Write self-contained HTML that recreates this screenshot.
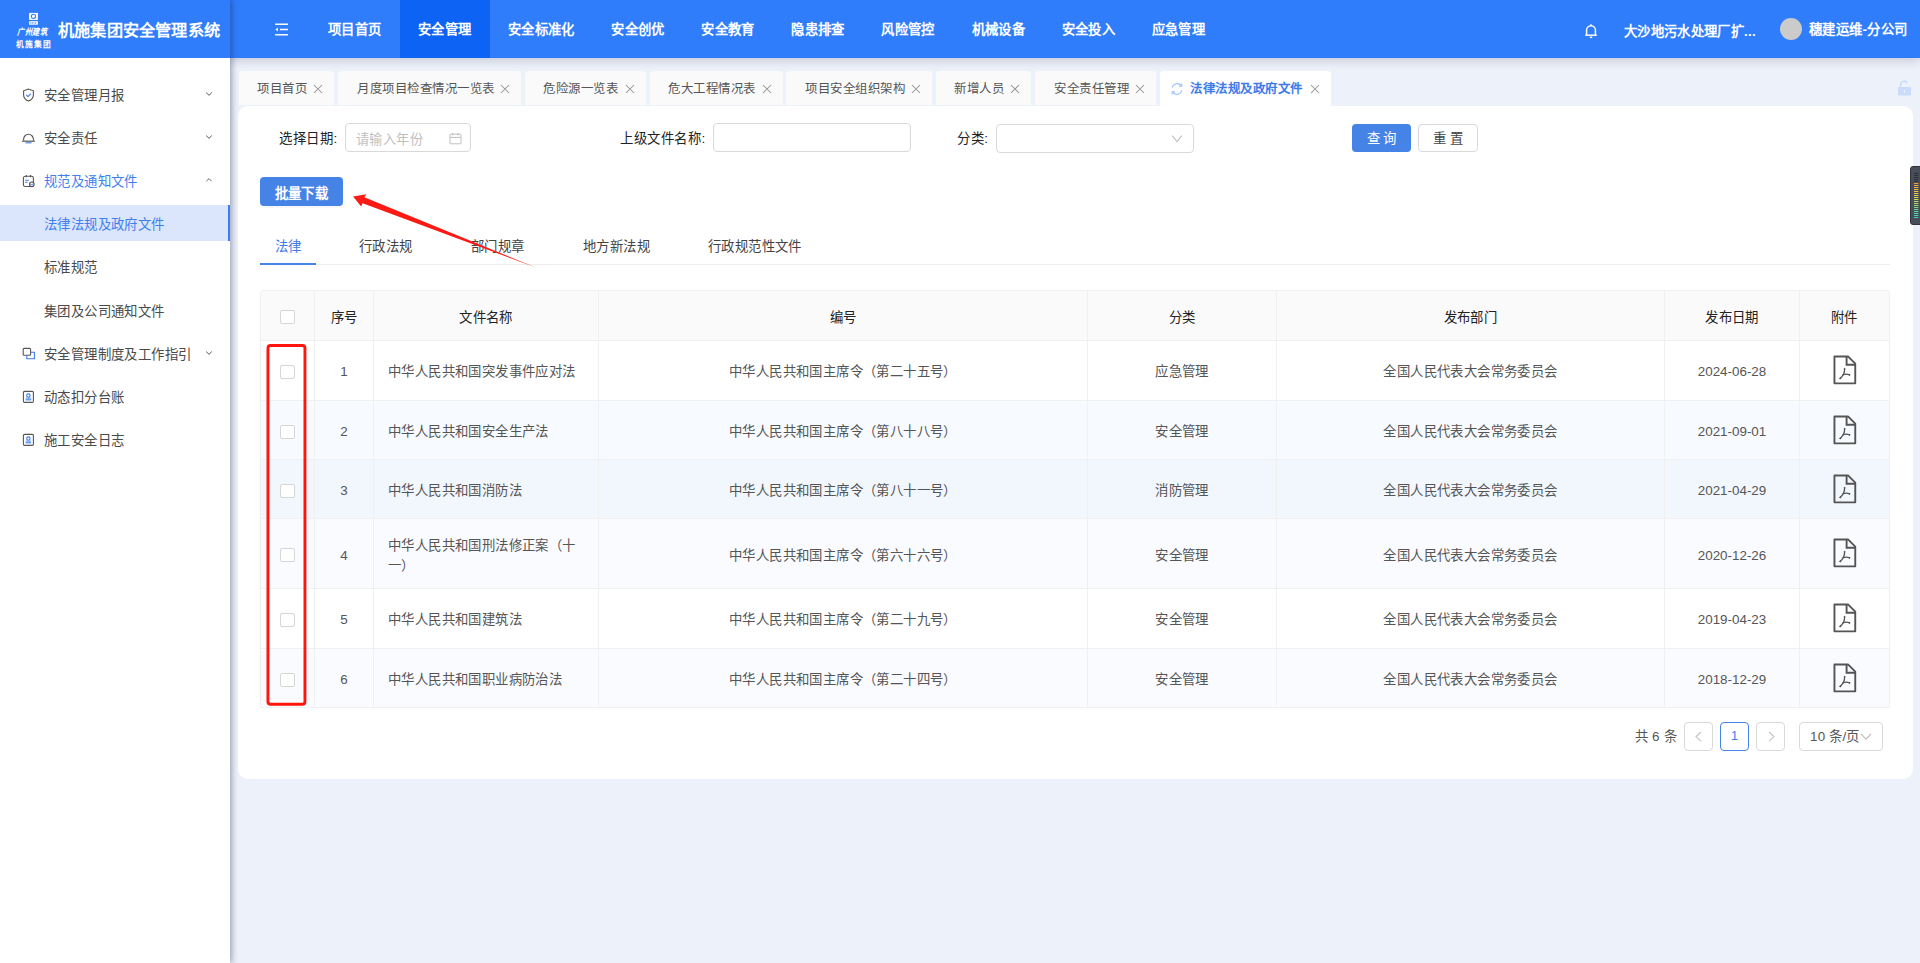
<!DOCTYPE html>
<html lang="zh-CN">
<head>
<meta charset="utf-8">
<title>机施集团安全管理系统</title>
<style>
*{box-sizing:border-box;margin:0;padding:0}
html,body{width:1920px;height:963px;overflow:hidden}
body{font-family:"Liberation Sans",sans-serif;font-size:13.4px;letter-spacing:.4px;color:#333;background:#edf1fa;position:relative}
.abs{position:absolute}
/* header */
#hdr{position:absolute;left:0;top:0;width:1920px;height:58px;background:#307dfc;z-index:5;box-shadow:0 2px 10px rgba(20,30,60,.2)}
#title{position:absolute;left:58px;top:0;height:58px;line-height:61px;font-size:16.2px;letter-spacing:.2px;font-weight:700;color:#fff;white-space:nowrap}
.nav{position:absolute;top:0;height:58px;line-height:59px;color:#fff;font-weight:700;font-size:13.33px;letter-spacing:.33px;text-align:center;white-space:nowrap}
.nav.on{background:#0d63f3}
/* sidebar */
#side{position:absolute;left:0;top:0;width:230px;height:963px;background:#fff;z-index:6;box-shadow:2px 0 6px rgba(10,30,70,.36)}
#side .top{position:absolute;left:0;top:0;width:230px;height:58px;background:#307dfc}
.mi{position:absolute;left:0;width:230px;height:36px;line-height:38px;font-size:13.4px;letter-spacing:.4px;color:#4a4a4a;white-space:nowrap}
.mi span{position:absolute;left:44px;top:0}
.mi.sel{background:#dbe6fd;color:#3f7ff0;border-right:2px solid #3c7df0;line-height:40px}
.mi.act{color:#3f7ff0}
/* page tabs */
.pt{position:absolute;top:71px;height:34px;background:#fafafa;border-radius:4px 4px 0 0;font-size:12.45px;letter-spacing:.5px;color:#555;line-height:37px;white-space:nowrap}
.pt span{position:absolute;top:0}
.pt.on{background:#fff;color:#3d7bea;height:36px;font-weight:700}
#card{position:absolute;left:238px;top:106px;width:1675px;height:673px;background:#fff;border-radius:10px}

.lbl{position:absolute;top:123px;height:29px;line-height:32px;letter-spacing:.6px;color:#222;white-space:nowrap}
.inp{position:absolute;border:1px solid #d9d9d9;border-radius:4px;background:#fff}
.btn{position:absolute;border-radius:4px;text-align:center;white-space:nowrap}
.it{position:absolute;top:233px;height:28px;line-height:28px;color:#444;white-space:nowrap}

#tb{position:absolute;left:260px;top:290px;width:1630px;border:1px solid #f0f0f0;border-bottom:none;border-radius:4px 4px 0 0;overflow:hidden}
.r{position:relative;width:100%;border-bottom:1px solid #f0f0f0}
.c{position:absolute;top:0;height:100%;border-right:1px solid #f0f0f0;padding-top:2px;line-height:20px;display:flex;align-items:center;justify-content:center;color:#555;white-space:nowrap}
.c:last-child{border-right:none}
.lo .c{padding-top:4px}
.lo .c:first-child,.lo .c:last-child{padding-top:2px}
.h .c{color:#222;font-weight:500;padding-top:4px}
.h .c:first-child{padding-top:2px}
.ck{width:15px;height:14px;border:1px solid #d6d6d6;border-radius:2px;background:#fff;margin-top:1px}
.pg{position:absolute;top:722px;height:29px;border:1px solid #d9d9d9;border-radius:4px;background:#fff}
</style>
</head>
<body>
<div id="hdr">
  <!-- fold icon -->
  <svg class="abs" style="left:273.500px;top:21.500px" width="15" height="15" viewBox="0 0 14 14" fill="none" stroke="#fff" stroke-width="1.4">
    <path d="M1 2.2h12M5.5 7h7.5M1 11.8h12"/><path d="M3.6 5.2L1.3 7l2.3 1.8z" fill="#fff" stroke="none"/>
  </svg>
  <div class="nav" style="left:309.7px;width:90.0px">项目首页</div>
<div class="nav on" style="left:399.7px;width:90.0px">安全管理</div>
<div class="nav" style="left:489.7px;width:103.4px">安全标准化</div>
<div class="nav" style="left:593.1px;width:90.0px">安全创优</div>
<div class="nav" style="left:683.1px;width:90.0px">安全教育</div>
<div class="nav" style="left:773.1px;width:90.0px">隐患排查</div>
<div class="nav" style="left:863.1px;width:90.0px">风险管控</div>
<div class="nav" style="left:953.2px;width:90.0px">机械设备</div>
<div class="nav" style="left:1043.2px;width:90.0px">安全投入</div>
<div class="nav" style="left:1133.2px;width:90.0px">应急管理</div>

  <!-- bell -->
  <svg class="abs" style="left:1584px;top:23px" width="14" height="16" viewBox="0 0 14 16" fill="none" stroke="#fff" stroke-width="1.45">
    <path d="M2.6 12V7.2a4.4 4.4 0 0 1 8.8 0V12"/><path d="M1.2 12.2h11.6"/><path d="M5.8 14.3h2.4" stroke-width="1.4"/><path d="M7 1.2v1.4"/>
  </svg>
  <div class="abs" style="left:1624px;top:0;height:58px;line-height:64px;color:#fff;font-weight:700;font-size:13.33px;letter-spacing:.33px;white-space:nowrap">大沙地污水处理厂扩...</div>
  <div class="abs" style="left:1780px;top:18px;width:22px;height:22px;border-radius:50%;background:#cbcbcb"></div>
  <div class="abs" style="left:1809px;top:0;height:58px;line-height:59px;color:#fff;font-weight:700;font-size:13.4px;white-space:nowrap">穗建运维-分公司</div>
</div>
<div id="side">
<div class="top">
  <!-- logo -->
  <svg class="abs" style="left:14px;top:10px" width="42" height="40" viewBox="0 0 42 40">
    <rect x="15.1" y="2.9" width="8.8" height="7" fill="#fff"/>
    <circle cx="19.5" cy="6.3" r="2.1" fill="none" stroke="#307dfc" stroke-width="1.1"/>
    <path d="M18.300 7.200l2.200-2" stroke="#fff" stroke-width=".7"/>
    <rect x="15.1" y="11.2" width="8.8" height="3.5" fill="#fff"/>
    <path d="M16.200 13h6.600" stroke="#307dfc" stroke-width="1" stroke-dasharray="1.1 .5"/>
    <text x="3.4" y="25.3" font-size="9" font-style="italic" font-weight="700" fill="#fff" font-family="Liberation Serif, serif" textLength="30" lengthAdjust="spacingAndGlyphs">广州建筑</text>
    <text x="1.9" y="36.7" font-size="7.7" font-weight="700" fill="#fff" font-family="Liberation Sans, sans-serif" textLength="35.2" lengthAdjust="spacing">机施集团</text>
  </svg>
  <div id="title">机施集团安全管理系统</div>
</div>
<div class="mi " style="top:77px"><svg class="abs" style="left:22px;top:11px" width="13" height="14" viewBox="0 0 13 14" fill="none"><path d="M6.5 1L1.6 2.8v4.1c0 2.9 2 4.9 4.9 6.1 2.9-1.2 4.9-3.2 4.9-6.1V2.8z" stroke="#555" stroke-width="1.1"/><path d="M4.3 6.9l1.7 1.7 2.8-3" stroke="#3c7df0" stroke-width="1.1"/></svg><span>安全管理月报</span><svg class="abs" style="left:205px;top:12.500px" width="8" height="8" viewBox="0 0 8 8" fill="none"><path d="M1.2 2.6L4 5.300l2.800-2.700" stroke="#555" stroke-width="1"/></svg></div>
<div class="mi " style="top:120px"><svg class="abs" style="left:21px;top:11px" width="15" height="14" viewBox="0 0 15 14" fill="none"><path d="M2.6 9.6V8.2a4.9 4.9 0 0 1 9.8 0v1.4" stroke="#555" stroke-width="1.1"/><path d="M1 10.2h13" stroke="#555" stroke-width="1.2"/><path d="M4.5 11.8h6" stroke="#3c7df0" stroke-width="1.1"/></svg><span>安全责任</span><svg class="abs" style="left:205px;top:12.500px" width="8" height="8" viewBox="0 0 8 8" fill="none"><path d="M1.2 2.6L4 5.300l2.800-2.700" stroke="#555" stroke-width="1"/></svg></div>
<div class="mi act" style="top:163px"><svg class="abs" style="left:22px;top:11px" width="14" height="14" viewBox="0 0 14 14" fill="none"><rect x="1.4" y="2.300" width="10" height="10.200" rx="1.8" stroke="#555" stroke-width="1.1"/><path d="M4.300 1v2.200M8.500 1v2.200" stroke="#555" stroke-width="1.1"/><path d="M3.200 6.300h3.600M3.200 8.300h2.400" stroke="#3c7df0" stroke-width="1"/><circle cx="9.800" cy="10.300" r="2.300" fill="#fff" stroke="#555" stroke-width="1.1"/><path d="M8.300 10.300h3" stroke="#3c7df0" stroke-width=".9"/></svg><span>规范及通知文件</span><svg class="abs" style="left:205px;top:13px" width="8" height="8" viewBox="0 0 8 8" fill="none"><path d="M1.4 5.2L4 2.6l2.6 2.6" stroke="#555" stroke-width="0.9"/></svg></div>
<div class="mi sel" style="top:205px"><span>法律法规及政府文件</span></div>
<div class="mi " style="top:249px"><span>标准规范</span></div>
<div class="mi " style="top:293px"><span>集团及公司通知文件</span></div>
<div class="mi " style="top:336px"><svg class="abs" style="left:22px;top:11px" width="14" height="14" viewBox="0 0 14 14" fill="none"><rect x="1.2" y="1.4" width="7.4" height="6.8" rx="1" stroke="#555" stroke-width="1.1"/><path d="M4.8 8.4v3.4h7.6V5.2H8.8" stroke="#3c7df0" stroke-width="1.1"/></svg><span>安全管理制度及工作指引</span><svg class="abs" style="left:205px;top:12.500px" width="8" height="8" viewBox="0 0 8 8" fill="none"><path d="M1.2 2.6L4 5.300l2.800-2.700" stroke="#555" stroke-width="1"/></svg></div>
<div class="mi " style="top:379px"><svg class="abs" style="left:22px;top:11px" width="13" height="14" viewBox="0 0 13 14" fill="none"><rect x="1.4" y="1.4" width="10" height="11" rx="1.2" stroke="#555" stroke-width="1.1"/><circle cx="6.4" cy="5.6" r="1.7" stroke="#3c7df0" stroke-width="1.1"/><path d="M3.6 9.8h5.6" stroke="#3c7df0" stroke-width="1.1"/><path d="M3.6 8.2h5.6" stroke="#3c7df0" stroke-width=".8"/></svg><span>动态扣分台账</span></div>
<div class="mi " style="top:422px"><svg class="abs" style="left:22px;top:11px" width="13" height="14" viewBox="0 0 13 14" fill="none"><rect x="1.4" y="1.4" width="10" height="11" rx="1.2" stroke="#555" stroke-width="1.1"/><circle cx="6.4" cy="5.6" r="1.7" stroke="#3c7df0" stroke-width="1.1"/><path d="M3.6 9.8h5.6" stroke="#3c7df0" stroke-width="1.1"/><path d="M3.6 8.2h5.6" stroke="#3c7df0" stroke-width=".8"/></svg><span>施工安全日志</span></div>
</div>
<div class="pt" style="left:239px;width:95px"><span style="left:18px">项目首页</span><svg class="abs" style="right:11.5px;top:13px" width="10" height="10" viewBox="0 0 10 10"><path d="M1 1l8 8M9 1L1 9" stroke="#929292" stroke-width="1.05" fill="none"/></svg></div>
<div class="pt" style="left:338px;width:183px"><span style="left:19px">月度项目检查情况一览表</span><svg class="abs" style="right:11.5px;top:13px" width="10" height="10" viewBox="0 0 10 10"><path d="M1 1l8 8M9 1L1 9" stroke="#929292" stroke-width="1.05" fill="none"/></svg></div>
<div class="pt" style="left:525px;width:121px"><span style="left:18px">危险源一览表</span><svg class="abs" style="right:11.5px;top:13px" width="10" height="10" viewBox="0 0 10 10"><path d="M1 1l8 8M9 1L1 9" stroke="#929292" stroke-width="1.05" fill="none"/></svg></div>
<div class="pt" style="left:650px;width:133px"><span style="left:18px">危大工程情况表</span><svg class="abs" style="right:11.5px;top:13px" width="10" height="10" viewBox="0 0 10 10"><path d="M1 1l8 8M9 1L1 9" stroke="#929292" stroke-width="1.05" fill="none"/></svg></div>
<div class="pt" style="left:786px;width:146px"><span style="left:19px">项目安全组织架构</span><svg class="abs" style="right:11.5px;top:13px" width="10" height="10" viewBox="0 0 10 10"><path d="M1 1l8 8M9 1L1 9" stroke="#929292" stroke-width="1.05" fill="none"/></svg></div>
<div class="pt" style="left:936px;width:95px"><span style="left:18px">新增人员</span><svg class="abs" style="right:11.5px;top:13px" width="10" height="10" viewBox="0 0 10 10"><path d="M1 1l8 8M9 1L1 9" stroke="#929292" stroke-width="1.05" fill="none"/></svg></div>
<div class="pt" style="left:1035px;width:121px"><span style="left:19px">安全责任管理</span><svg class="abs" style="right:11.5px;top:13px" width="10" height="10" viewBox="0 0 10 10"><path d="M1 1l8 8M9 1L1 9" stroke="#929292" stroke-width="1.05" fill="none"/></svg></div>
<div class="pt on" style="left:1160px;width:171px"><svg class="abs" style="left:9.500px;top:10.500px" width="14" height="14" viewBox="0 0 13 13" fill="none" stroke="#9cc2fa" stroke-width="1"><path d="M2 5.2A4.8 4.8 0 0 1 10.6 3.6"/><path d="M11 7.8A4.8 4.8 0 0 1 2.4 9.4"/><path d="M10.9 1.4v2.4H8.5M2.1 11.6V9.2h2.4" stroke-width="1"/></svg><span style="left:30px">法律法规及政府文件</span><svg class="abs" style="right:11.5px;top:13px" width="10" height="10" viewBox="0 0 10 10"><path d="M1 1l8 8M9 1L1 9" stroke="#929292" stroke-width="1.05" fill="none"/></svg></div>
<svg class="abs" style="left:1897px;top:80px" width="15" height="16" viewBox="0 0 15 16"><rect x="1" y="7" width="13" height="8.4" rx="1" fill="#c9dcfb"/><path d="M3.6 7V4.6a3.4 3.4 0 0 1 6.6-1.2" fill="none" stroke="#c9dcfb" stroke-width="1.5"/><rect x="6.9" y="10" width="1.3" height="2.6" fill="#edf1fa"/></svg>
<div id="card"></div>

<div class="lbl" style="left:279px">选择日期:</div>
<div class="inp" style="left:345px;top:123px;width:126px;height:29px"><span class="abs" style="left:10px;top:0;line-height:31px;color:#bfbfbf;white-space:nowrap;font-size:13.2px">请输入年份</span>
<svg class="abs" style="left:103px;top:8px" width="13" height="13" viewBox="0 0 13 13" fill="none" stroke="#bfbfbf" stroke-width="1"><rect x="1" y="2.2" width="11" height="9.6" rx=".8"/><path d="M1 5.4h11M3.8 .8v2.6M9.2 .8v2.6"/></svg></div>
<div class="lbl" style="left:620px">上级文件名称:</div>
<div class="inp" style="left:713px;top:123px;width:198px;height:29px"></div>
<div class="lbl" style="left:957px">分类:</div>
<div class="inp" style="left:996px;top:124px;width:198px;height:29px"><svg class="abs" style="left:174px;top:8px" width="12" height="12" viewBox="0 0 12 12" fill="none" stroke="#bdbdbd" stroke-width="1.05"><path d="M1.2 2.600L6 8.600l4.800-6"/></svg></div>
<div class="btn" style="left:1352px;top:124px;width:59px;height:28px;line-height:30px;background:#4683e6;color:#fff;font-weight:500;letter-spacing:0">查 询</div>
<div class="btn" style="left:1418px;top:124px;width:60px;height:28px;line-height:28px;background:#fff;border:1px solid #d9d9d9;color:#444;letter-spacing:0">重 置</div>
<div class="btn" style="left:260px;top:177px;width:83px;height:29px;line-height:33px;background:#4683e6;color:#fff;font-weight:700;box-shadow:0 2px 0 rgba(0,0,0,.03)">批量下载</div>
<!-- inner tabs -->
<div class="abs" style="left:260px;top:264px;width:1630px;height:1px;background:#ececec"></div>
<div class="abs" style="left:260px;top:263px;width:56px;height:2px;background:#4683e6"></div>
<div class="it" style="left:275px;color:#3e7be6">法律</div>
<div class="it" style="left:359px">行政法规</div>
<div class="it" style="left:471px">部门规章</div>
<div class="it" style="left:583px">地方新法规</div>
<div class="it" style="left:708px">行政规范性文件</div>
<!-- red arrow -->
<svg class="abs" style="left:340px;top:180px;z-index:3" width="210" height="100" viewBox="340 180 210 100"><path d="M353.1 196.5 L366.2 194.2 L364.4 197.3 L536.5 267.8 L362.6 203.2 L361.2 206.5 Z" fill="#fb1a14"/></svg>
<div id="tb">
<div class="r h" style="height:50px;background:#fafafa"><div class="c" style="left:0px;width:54px;"><div class="ck"></div></div><div class="c" style="left:54px;width:59px;">序号</div><div class="c" style="left:113px;width:225px;">文件名称</div><div class="c" style="left:338px;width:489px;">编号</div><div class="c" style="left:827px;width:189px;">分类</div><div class="c" style="left:1016px;width:388px;">发布部门</div><div class="c" style="left:1404px;width:135px;">发布日期</div><div class="c" style="left:1539px;width:89px;">附件</div></div>
<div class="r" style="height:60px;background:#fff"><div class="c" style="left:0px;width:54px;"><div class="ck"></div></div><div class="c" style="left:54px;width:59px;letter-spacing:0">1</div><div class="c" style="left:113px;width:225px;justify-content:flex-start"><div style="width:100%;padding-left:14px;line-height:20px;white-space:normal;text-align:left">中华人民共和国突发事件应对法</div></div><div class="c" style="left:338px;width:489px;">中华人民共和国主席令（第二十五号）</div><div class="c" style="left:827px;width:189px;">应急管理</div><div class="c" style="left:1016px;width:388px;">全国人民代表大会常务委员会</div><div class="c" style="left:1404px;width:135px;letter-spacing:0">2024-06-28</div><div class="c" style="left:1539px;width:89px;"><svg style="margin-top:-3px;flex:none" width="24" height="30" viewBox="0 0 24 30" fill="none" stroke="#545454"><path d="M1.45 1.45H15L22.25 8.7V28.35H1.45Z" stroke-width="1.9" stroke-linejoin="round"/><path d="M13.6 1.6V9.7H22" stroke-width="1.9"/><path d="M11.6 13.8c.1 2-.2 3.600-1 5.200-1 2-2.100 3.300-3.500 4.400" stroke-width="1.3" stroke-linecap="round"/><path d="M10 19.800c2.200-.9 4.300-.9 6.600 0" stroke-width="1.3" stroke-linecap="round"/><circle cx="11.6" cy="13.900" r=".55" fill="#545454" stroke-width=".8"/><circle cx="16.500" cy="19.900" r=".5" fill="#545454" stroke-width=".8"/><circle cx="7.300" cy="23.300" r=".6" fill="#545454" stroke-width=".8"/></svg></div></div>
<div class="r lo" style="height:59px;background:#f7fafe"><div class="c" style="left:0px;width:54px;"><div class="ck"></div></div><div class="c" style="left:54px;width:59px;letter-spacing:0">2</div><div class="c" style="left:113px;width:225px;justify-content:flex-start"><div style="width:100%;padding-left:14px;line-height:20px;white-space:normal;text-align:left">中华人民共和国安全生产法</div></div><div class="c" style="left:338px;width:489px;">中华人民共和国主席令（第八十八号）</div><div class="c" style="left:827px;width:189px;">安全管理</div><div class="c" style="left:1016px;width:388px;">全国人民代表大会常务委员会</div><div class="c" style="left:1404px;width:135px;letter-spacing:0">2021-09-01</div><div class="c" style="left:1539px;width:89px;"><svg style="margin-top:-3px;flex:none" width="24" height="30" viewBox="0 0 24 30" fill="none" stroke="#545454"><path d="M1.45 1.45H15L22.25 8.7V28.35H1.45Z" stroke-width="1.9" stroke-linejoin="round"/><path d="M13.6 1.6V9.7H22" stroke-width="1.9"/><path d="M11.6 13.8c.1 2-.2 3.600-1 5.200-1 2-2.100 3.300-3.500 4.400" stroke-width="1.3" stroke-linecap="round"/><path d="M10 19.800c2.200-.9 4.300-.9 6.600 0" stroke-width="1.3" stroke-linecap="round"/><circle cx="11.6" cy="13.900" r=".55" fill="#545454" stroke-width=".8"/><circle cx="16.500" cy="19.900" r=".5" fill="#545454" stroke-width=".8"/><circle cx="7.300" cy="23.300" r=".6" fill="#545454" stroke-width=".8"/></svg></div></div>
<div class="r lo" style="height:59px;background:#f2f7fe"><div class="c" style="left:0px;width:54px;"><div class="ck"></div></div><div class="c" style="left:54px;width:59px;letter-spacing:0">3</div><div class="c" style="left:113px;width:225px;justify-content:flex-start"><div style="width:100%;padding-left:14px;line-height:20px;white-space:normal;text-align:left">中华人民共和国消防法</div></div><div class="c" style="left:338px;width:489px;">中华人民共和国主席令（第八十一号）</div><div class="c" style="left:827px;width:189px;">消防管理</div><div class="c" style="left:1016px;width:388px;">全国人民代表大会常务委员会</div><div class="c" style="left:1404px;width:135px;letter-spacing:0">2021-04-29</div><div class="c" style="left:1539px;width:89px;"><svg style="margin-top:-3px;flex:none" width="24" height="30" viewBox="0 0 24 30" fill="none" stroke="#545454"><path d="M1.45 1.45H15L22.25 8.7V28.35H1.45Z" stroke-width="1.9" stroke-linejoin="round"/><path d="M13.6 1.6V9.7H22" stroke-width="1.9"/><path d="M11.6 13.8c.1 2-.2 3.600-1 5.200-1 2-2.100 3.300-3.500 4.400" stroke-width="1.3" stroke-linecap="round"/><path d="M10 19.800c2.200-.9 4.300-.9 6.600 0" stroke-width="1.3" stroke-linecap="round"/><circle cx="11.6" cy="13.900" r=".55" fill="#545454" stroke-width=".8"/><circle cx="16.500" cy="19.900" r=".5" fill="#545454" stroke-width=".8"/><circle cx="7.300" cy="23.300" r=".6" fill="#545454" stroke-width=".8"/></svg></div></div>
<div class="r lo" style="height:70px;background:#fafbff"><div class="c" style="left:0px;width:54px;"><div class="ck"></div></div><div class="c" style="left:54px;width:59px;letter-spacing:0">4</div><div class="c" style="left:113px;width:225px;justify-content:flex-start"><div style="width:100%;padding-left:14px;line-height:20px;white-space:normal;text-align:left">中华人民共和国刑法修正案（十<br>一）</div></div><div class="c" style="left:338px;width:489px;">中华人民共和国主席令（第六十六号）</div><div class="c" style="left:827px;width:189px;">安全管理</div><div class="c" style="left:1016px;width:388px;">全国人民代表大会常务委员会</div><div class="c" style="left:1404px;width:135px;letter-spacing:0">2020-12-26</div><div class="c" style="left:1539px;width:89px;"><svg style="margin-top:-3px;flex:none" width="24" height="30" viewBox="0 0 24 30" fill="none" stroke="#545454"><path d="M1.45 1.45H15L22.25 8.7V28.35H1.45Z" stroke-width="1.9" stroke-linejoin="round"/><path d="M13.6 1.6V9.7H22" stroke-width="1.9"/><path d="M11.6 13.8c.1 2-.2 3.600-1 5.200-1 2-2.100 3.300-3.500 4.400" stroke-width="1.3" stroke-linecap="round"/><path d="M10 19.800c2.200-.9 4.300-.9 6.600 0" stroke-width="1.3" stroke-linecap="round"/><circle cx="11.6" cy="13.900" r=".55" fill="#545454" stroke-width=".8"/><circle cx="16.500" cy="19.900" r=".5" fill="#545454" stroke-width=".8"/><circle cx="7.300" cy="23.300" r=".6" fill="#545454" stroke-width=".8"/></svg></div></div>
<div class="r" style="height:60px;background:#fff"><div class="c" style="left:0px;width:54px;"><div class="ck"></div></div><div class="c" style="left:54px;width:59px;letter-spacing:0">5</div><div class="c" style="left:113px;width:225px;justify-content:flex-start"><div style="width:100%;padding-left:14px;line-height:20px;white-space:normal;text-align:left">中华人民共和国建筑法</div></div><div class="c" style="left:338px;width:489px;">中华人民共和国主席令（第二十九号）</div><div class="c" style="left:827px;width:189px;">安全管理</div><div class="c" style="left:1016px;width:388px;">全国人民代表大会常务委员会</div><div class="c" style="left:1404px;width:135px;letter-spacing:0">2019-04-23</div><div class="c" style="left:1539px;width:89px;"><svg style="margin-top:-3px;flex:none" width="24" height="30" viewBox="0 0 24 30" fill="none" stroke="#545454"><path d="M1.45 1.45H15L22.25 8.7V28.35H1.45Z" stroke-width="1.9" stroke-linejoin="round"/><path d="M13.6 1.6V9.7H22" stroke-width="1.9"/><path d="M11.6 13.8c.1 2-.2 3.600-1 5.200-1 2-2.100 3.300-3.500 4.400" stroke-width="1.3" stroke-linecap="round"/><path d="M10 19.800c2.200-.9 4.300-.9 6.600 0" stroke-width="1.3" stroke-linecap="round"/><circle cx="11.6" cy="13.900" r=".55" fill="#545454" stroke-width=".8"/><circle cx="16.500" cy="19.900" r=".5" fill="#545454" stroke-width=".8"/><circle cx="7.300" cy="23.300" r=".6" fill="#545454" stroke-width=".8"/></svg></div></div>
<div class="r lo" style="height:59px;background:#fafbff"><div class="c" style="left:0px;width:54px;"><div class="ck"></div></div><div class="c" style="left:54px;width:59px;letter-spacing:0">6</div><div class="c" style="left:113px;width:225px;justify-content:flex-start"><div style="width:100%;padding-left:14px;line-height:20px;white-space:normal;text-align:left">中华人民共和国职业病防治法</div></div><div class="c" style="left:338px;width:489px;">中华人民共和国主席令（第二十四号）</div><div class="c" style="left:827px;width:189px;">安全管理</div><div class="c" style="left:1016px;width:388px;">全国人民代表大会常务委员会</div><div class="c" style="left:1404px;width:135px;letter-spacing:0">2018-12-29</div><div class="c" style="left:1539px;width:89px;"><svg style="margin-top:-3px;flex:none" width="24" height="30" viewBox="0 0 24 30" fill="none" stroke="#545454"><path d="M1.45 1.45H15L22.25 8.7V28.35H1.45Z" stroke-width="1.9" stroke-linejoin="round"/><path d="M13.6 1.6V9.7H22" stroke-width="1.9"/><path d="M11.6 13.8c.1 2-.2 3.600-1 5.200-1 2-2.100 3.300-3.500 4.400" stroke-width="1.3" stroke-linecap="round"/><path d="M10 19.800c2.200-.9 4.300-.9 6.600 0" stroke-width="1.3" stroke-linecap="round"/><circle cx="11.6" cy="13.900" r=".55" fill="#545454" stroke-width=".8"/><circle cx="16.500" cy="19.900" r=".5" fill="#545454" stroke-width=".8"/><circle cx="7.300" cy="23.300" r=".6" fill="#545454" stroke-width=".8"/></svg></div></div>
</div>
<svg class="abs" style="left:260px;top:340px;z-index:3" width="60" height="372" viewBox="260 340 60 372"><rect x="267.95" y="345.55" width="37" height="358.7" rx="2.6" fill="none" stroke="#ff150c" stroke-width="2.9"/></svg>
<div class="abs" style="left:1635px;top:722px;height:29px;line-height:29px;color:#555;white-space:nowrap;letter-spacing:.2px">共 6 条</div>
<div class="pg" style="left:1684px;width:29px"><svg class="abs" style="left:8px;top:8px" width="11" height="11" viewBox="0 0 11 11" fill="none" stroke="#c4c4c4" stroke-width="1"><path d="M8 1L3 5.600l5 4.600" stroke-width="1.15"/></svg></div>
<div class="pg" style="left:1720px;width:29px;border-color:#4683e6;color:#4683e6;text-align:center;line-height:26px;letter-spacing:0">1</div>
<div class="pg" style="left:1756px;width:29px"><svg class="abs" style="left:9px;top:8px" width="11" height="11" viewBox="0 0 11 11" fill="none" stroke="#c4c4c4" stroke-width="1"><path d="M3 1l5 4.600-5 4.600" stroke-width="1.15"/></svg></div>
<div class="pg" style="left:1799px;width:84px;color:#555;line-height:28px;padding-left:10px;white-space:nowrap;letter-spacing:.2px">10 条/页<svg class="abs" style="left:60px;top:9px" width="12" height="10" viewBox="0 0 12 10" fill="none" stroke="#bdbdbd" stroke-width="1.1"><path d="M1 1.800l5 5.400 5-5.400"/></svg></div>
<div class="abs" style="left:1910px;top:166px;width:14px;height:59px;background:#484d5a;border:1px solid #30333c;border-radius:3px;z-index:6"><svg class="abs" style="left:0;top:0" width="12" height="57" viewBox="0 0 12 57"><rect x="3" y="6" width="4.4" height="1" fill="#2c2f38"/><rect x="3" y="8" width="4.4" height="1" fill="#2c2f38"/><rect x="3" y="10" width="4.4" height="1" fill="#2c2f38"/><rect x="3" y="12" width="4.4" height="1" fill="#2c2f38"/><rect x="3" y="14" width="4.4" height="1" fill="#2c2f38"/><rect x="3" y="16" width="4.4" height="1" fill="#f5a03c"/><rect x="3" y="18" width="4.4" height="1" fill="#f4a93e"/><rect x="3" y="20" width="4.4" height="1" fill="#f2b240"/><rect x="3" y="22" width="4.4" height="1" fill="#f1ba42"/><rect x="3" y="24" width="4.4" height="1" fill="#f0c344"/><rect x="3" y="26" width="4.4" height="1" fill="#eecc46"/><rect x="3" y="28" width="4.4" height="1" fill="#e5d14a"/><rect x="3" y="30" width="4.4" height="1" fill="#dcd54e"/><rect x="3" y="32" width="4.4" height="1" fill="#d2da53"/><rect x="3" y="34" width="4.4" height="1" fill="#c2db5c"/><rect x="3" y="36" width="4.4" height="1" fill="#abda69"/><rect x="3" y="38" width="4.4" height="1" fill="#94d976"/><rect x="3" y="40" width="4.4" height="1" fill="#7dd784"/><rect x="3" y="42" width="4.4" height="1" fill="#6ed691"/><rect x="3" y="44" width="4.4" height="1" fill="#62d49e"/><rect x="3" y="46" width="4.4" height="1" fill="#55d3aa"/><rect x="3" y="48" width="4.4" height="1" fill="#49d1b7"/><rect x="3" y="50" width="4.4" height="1" fill="#3cd0c4"/></svg></div>


</body>
</html>
